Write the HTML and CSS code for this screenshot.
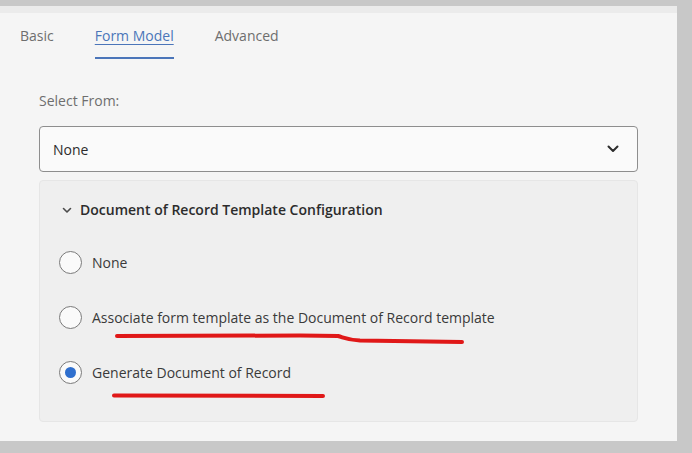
FILE: index.html
```html
<!DOCTYPE html>
<html lang="en">
<head>
    <meta charset="UTF-8">
    <meta name="viewport" content="width=device-width, initial-scale=1.0">
    <title>Form Model</title>
    <link rel="stylesheet" href="styles.css">
</head>
<body>
    <div class="panel">
        <div class="tabs">
            <span class="tab">Basic</span>
            <span class="tab active">Form Model</span>
            <span class="tab">Advanced</span>
        </div>

        <div class="content">
            <label class="field-label">Select From:</label>
            <div class="select">
                <span>None</span>
                <svg class="select-chevron" width="12" height="8" viewBox="0 0 12 8">
                    <path d="M1.5 1.5 L6 6 L10.5 1.5" fill="none" stroke="#2c2c2c" stroke-width="2" stroke-linecap="round" stroke-linejoin="round"/>
                </svg>
            </div>

            <div class="card">
                <div class="card-header">
                    <svg class="card-chevron" width="10" height="7" viewBox="0 0 10 7">
                        <path d="M1.5 1.5 L5 5 L8.5 1.5" fill="none" stroke="#4b4b4b" stroke-width="1.6" stroke-linecap="round" stroke-linejoin="round"/>
                    </svg>
                    <h3>Document of Record Template Configuration</h3>
                </div>
                <div class="radio-group">
                    <div class="radio-row">
                        <span class="radio"></span>
                        <span class="radio-label">None</span>
                    </div>
                    <div class="radio-row">
                        <span class="radio"></span>
                        <span class="radio-label">Associate form template as the Document of Record template</span>
                    </div>
                    <div class="radio-row">
                        <span class="radio checked"></span>
                        <span class="radio-label">Generate Document of Record</span>
                    </div>
                </div>
            </div>
        </div>

        <!-- hand drawn marks on the screenshot -->
        <svg class="marks" width="692" height="453" viewBox="0 0 692 453">
            <path d="M117 336 L300 335.5 L338 336 C345 338 348 340 360 340.5 L462 342" fill="none" stroke="#e01818" stroke-width="4" stroke-linecap="round"/>
            <path d="M114 395.5 L323 396" fill="none" stroke="#e01818" stroke-width="4" stroke-linecap="round"/>
        </svg>
    </div>
</body>
</html>
```

FILE: styles.css
```css
* {
    margin: 0;
    padding: 0;
    box-sizing: border-box;
}

body {
    background: #c8c8c8;
    font-family: 'Open Sans', 'Noto Sans', sans-serif;
    color: #2c2c2c;
    height: 453px;
    overflow: hidden;
}

.panel {
    margin-top: 6px;
    width: 677px;
    height: 435px;
    background: #f5f5f5;
    border-top: 7px solid #ebebeb;
}

.tabs {
    display: flex;
    gap: 41px;
    padding-left: 20px;
    height: 46px;
}

.tab {
    font-size: 14px;
    color: #6e6e6e;
    padding-top: 8px;
    line-height: 30px;
    height: 46px;
}

.tab.active {
    color: #4b75b9;
    text-decoration: underline;
    text-underline-offset: 3px;
    border-bottom: 2px solid #4b75b9;
}

.content {
    padding: 33px 39px 0 39px;
    width: 677px;
}

.field-label {
    display: block;
    font-size: 14px;
    color: #6e6e6e;
    line-height: 18px;
    margin-bottom: 16px;
}

.select {
    display: flex;
    align-items: center;
    justify-content: space-between;
    height: 46px;
    padding: 0 18px 0 13px;
    background: #fafafa;
    border: 1px solid #8e8e8e;
    border-radius: 4px;
    font-size: 14px;
    color: #2c2c2c;
}

.card {
    margin-top: 8px;
    height: 242px;
    background: #efefef;
    border: 1px solid #e6e6e6;
    border-radius: 4px;
    padding: 20px 0 0 19px;
}

.card-header {
    display: flex;
    align-items: center;
    gap: 8px;
    padding-left: 3px;
}

.card-header h3 {
    font-size: 14px;
    font-weight: 600;
    color: #2c2c2c;
    line-height: 18px;
}

.radio-group {
    display: flex;
    flex-direction: column;
    gap: 32px;
    margin-top: 32px;
}

.radio-row {
    display: flex;
    align-items: center;
    gap: 10px;
    height: 23px;
}

.radio {
    width: 23px;
    height: 23px;
    border-radius: 50%;
    border: 1.5px solid #7a7a7a;
    background: #fafafa;
    display: flex;
    align-items: center;
    justify-content: center;
}

.radio.checked::after {
    content: '';
    width: 11px;
    height: 11px;
    border-radius: 50%;
    background: #2f6fce;
}

.radio-label {
    font-size: 14px;
    color: #3a3a3a;
}

.marks {
    position: absolute;
    top: 0;
    left: 0;
    pointer-events: none;
}
```
